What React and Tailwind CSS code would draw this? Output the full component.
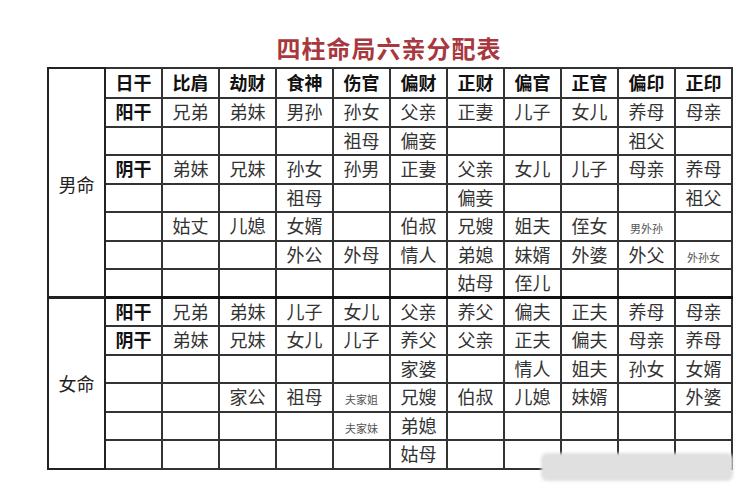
import React from 'react';

const heads = ['日干', '比肩', '劫财', '食神', '伤官', '偏财', '正财', '偏官', '正官', '偏印', '正印'];

// "~" marks the tiny squeezed-in text
const male = [
  ['阳干', '兄弟', '弟妹', '男孙', '孙女', '父亲', '正妻', '儿子', '女儿', '养母', '母亲'],
  ['', '', '', '', '祖母', '偏妾', '', '', '', '祖父', ''],
  ['阴干', '弟妹', '兄妹', '孙女', '孙男', '正妻', '父亲', '女儿', '儿子', '母亲', '养母'],
  ['', '', '', '祖母', '', '', '偏妾', '', '', '', '祖父'],
  ['', '姑丈', '儿媳', '女婿', '', '伯叔', '兄嫂', '姐夫', '侄女', '~男外孙', ''],
  ['', '', '', '外公', '外母', '情人', '弟媳', '妹婿', '外婆', '外父', '~外孙女'],
  ['', '', '', '', '', '', '姑母', '侄儿', '', '', ''],
];

const female = [
  ['阳干', '兄弟', '弟妹', '儿子', '女儿', '父亲', '养父', '偏夫', '正夫', '养母', '母亲'],
  ['阴干', '弟妹', '兄妹', '女儿', '儿子', '养父', '父亲', '正夫', '偏夫', '母亲', '养母'],
  ['', '', '', '', '', '家婆', '', '情人', '姐夫', '孙女', '女婿'],
  ['', '', '家公', '祖母', '~夫家姐', '兄嫂', '伯叔', '儿媳', '妹婿', '', '外婆'],
  ['', '', '', '', '~夫家妹', '弟媳', '', '', '', '', ''],
  ['', '', '', '', '', '姑母', '', '', '', '', ''],
];

const font = { fontFamily: '"Noto Sans CJK SC", "Noto Sans", sans-serif' };

function Cell({ v, i }) {
  const small = v.startsWith('~');
  const bold = i === 0;
  return (
    <td className="border-2 border-[#333] w-[57px] h-[28.5px] p-0 text-center align-middle">
      {small ? (
        <span className="text-[11px] text-[#555] leading-none">{v.slice(1)}</span>
      ) : (
        <span className={`text-[18px] leading-none ${bold ? 'font-bold text-[#111]' : 'text-[#333]'}`}>{v}</span>
      )}
    </td>
  );
}

export default function App() {
  return (
    <div className="w-[750px] h-[500px] bg-white relative overflow-hidden" style={font}>
      <div className="ml-[47px] w-[684px] pt-[34px]">
        <div className="text-center text-[24px] leading-[28px] font-bold tracking-[1px] text-[#a8383e]">
          四柱命局六亲分配表
        </div>
        <table className="mt-[5px] border-collapse border-2 border-[#111] table-fixed w-[684px]">
          <tbody>
            <tr className="h-[30px]">
              <td rowSpan={8} className="border-2 border-[#222] w-[57px] p-0 text-center align-middle">
                <span className="text-[18px] text-[#222] relative top-[2px]">男命</span>
              </td>
              {heads.map((h) => (
                <td key={h} className="border-2 border-[#333] w-[57px] p-0 text-center align-middle">
                  <span className="text-[18px] font-bold text-[#111] leading-none">{h}</span>
                </td>
              ))}
            </tr>
            {male.map((r, ri) => (
              <tr key={'m' + ri} className="h-[28.5px]">
                {r.map((v, i) => <Cell key={i} v={v} i={i} />)}
              </tr>
            ))}
            {female.map((r, ri) => (
              <tr key={'f' + ri} className={`h-[28.5px] ${ri === 0 ? 'border-t-[3px] border-[#111]' : ''}`}>
                {ri === 0 && (
                  <td rowSpan={6} className="border-2 border-t-[3px] border-[#222] p-0 text-center align-middle">
                    <span className="text-[18px] text-[#222]">女命</span>
                  </td>
                )}
                {r.map((v, i) => <Cell key={i} v={v} i={i} />)}
              </tr>
            ))}
          </tbody>
        </table>
      </div>
      {/* smudged-out watermark in bottom right corner */}
      <div className="absolute left-[541px] top-[453px] w-[192px] h-[28px] bg-[#e0e0e0] rounded-[6px] blur-[1.5px]" />
    </div>
  );
}
